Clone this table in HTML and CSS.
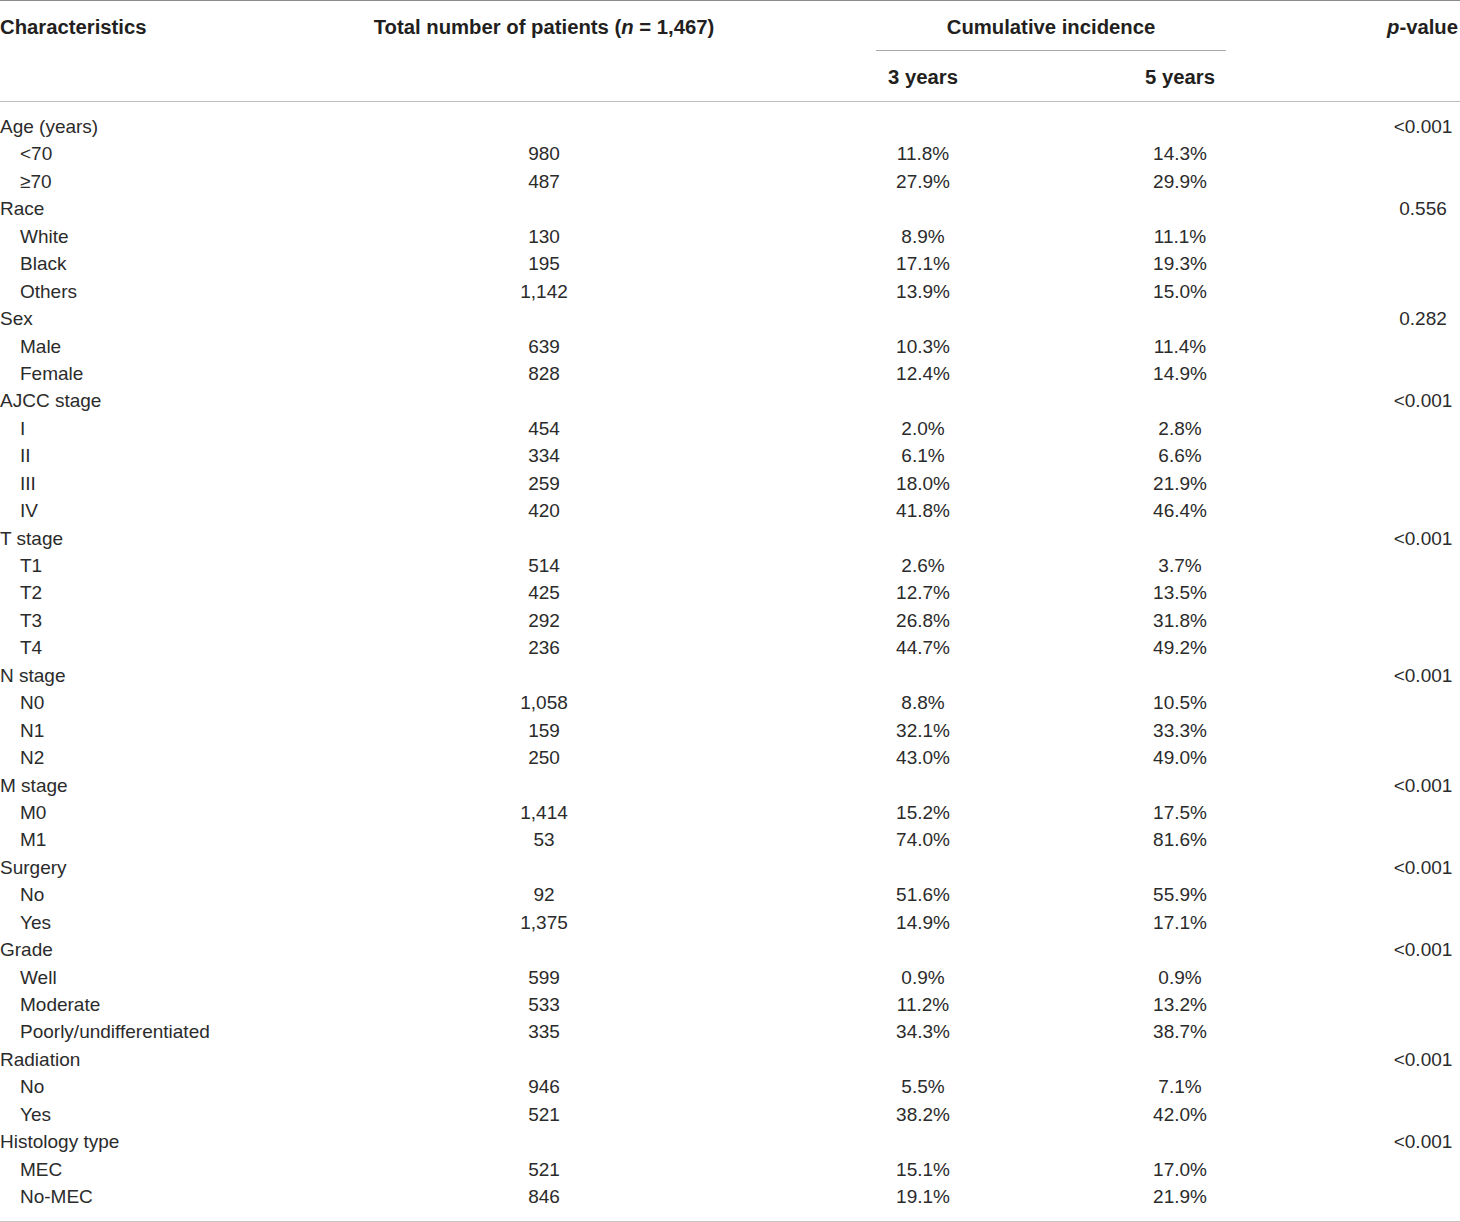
FILE: index.html
```html
<!DOCTYPE html>
<html lang="en">
    <head>
        <meta charset="UTF-8" />
        <meta name="viewport" content="width=device-width, initial-scale=1.0" />
        <title>Cumulative incidence by characteristics</title>
        <link rel="stylesheet" href="styles.css">
    </head>
    <body>
        <table class="results">
            <colgroup>
                <col class="col-label" />
                <col class="col-total" />
                <col class="col-three" />
                <col class="col-five" />
                <col class="col-p" />
            </colgroup>
            <thead>
                <tr class="head-top">
                    <th rowspan="2" class="label">Characteristics</th>
                    <th rowspan="2">Total number of patients (<i>n</i> = 1,467)</th>
                    <th colspan="2" class="group">
                        <div class="group-title">Cumulative incidence</div>
                    </th>
                    <th rowspan="2" class="pval"><i>p</i>-value</th>
                </tr>
                <tr class="head-sub">
                    <th>3 years</th>
                    <th>5 years</th>
                </tr>
            </thead>
            <tbody>
                <tr class="cat"><td class="label">Age (years)</td><td></td><td></td><td></td><td class="pval">&lt;0.001</td></tr>
                <tr><td class="label sub">&lt;70</td><td>980</td><td>11.8%</td><td>14.3%</td><td></td></tr>
                <tr><td class="label sub">≥70</td><td>487</td><td>27.9%</td><td>29.9%</td><td></td></tr>

                <tr class="cat"><td class="label">Race</td><td></td><td></td><td></td><td class="pval">0.556</td></tr>
                <tr><td class="label sub">White</td><td>130</td><td>8.9%</td><td>11.1%</td><td></td></tr>
                <tr><td class="label sub">Black</td><td>195</td><td>17.1%</td><td>19.3%</td><td></td></tr>
                <tr><td class="label sub">Others</td><td>1,142</td><td>13.9%</td><td>15.0%</td><td></td></tr>

                <tr class="cat"><td class="label">Sex</td><td></td><td></td><td></td><td class="pval">0.282</td></tr>
                <tr><td class="label sub">Male</td><td>639</td><td>10.3%</td><td>11.4%</td><td></td></tr>
                <tr><td class="label sub">Female</td><td>828</td><td>12.4%</td><td>14.9%</td><td></td></tr>

                <tr class="cat"><td class="label">AJCC stage</td><td></td><td></td><td></td><td class="pval">&lt;0.001</td></tr>
                <tr><td class="label sub">I</td><td>454</td><td>2.0%</td><td>2.8%</td><td></td></tr>
                <tr><td class="label sub">II</td><td>334</td><td>6.1%</td><td>6.6%</td><td></td></tr>
                <tr><td class="label sub">III</td><td>259</td><td>18.0%</td><td>21.9%</td><td></td></tr>
                <tr><td class="label sub">IV</td><td>420</td><td>41.8%</td><td>46.4%</td><td></td></tr>

                <tr class="cat"><td class="label">T stage</td><td></td><td></td><td></td><td class="pval">&lt;0.001</td></tr>
                <tr><td class="label sub">T1</td><td>514</td><td>2.6%</td><td>3.7%</td><td></td></tr>
                <tr><td class="label sub">T2</td><td>425</td><td>12.7%</td><td>13.5%</td><td></td></tr>
                <tr><td class="label sub">T3</td><td>292</td><td>26.8%</td><td>31.8%</td><td></td></tr>
                <tr><td class="label sub">T4</td><td>236</td><td>44.7%</td><td>49.2%</td><td></td></tr>

                <tr class="cat"><td class="label">N stage</td><td></td><td></td><td></td><td class="pval">&lt;0.001</td></tr>
                <tr><td class="label sub">N0</td><td>1,058</td><td>8.8%</td><td>10.5%</td><td></td></tr>
                <tr><td class="label sub">N1</td><td>159</td><td>32.1%</td><td>33.3%</td><td></td></tr>
                <tr><td class="label sub">N2</td><td>250</td><td>43.0%</td><td>49.0%</td><td></td></tr>

                <tr class="cat"><td class="label">M stage</td><td></td><td></td><td></td><td class="pval">&lt;0.001</td></tr>
                <tr><td class="label sub">M0</td><td>1,414</td><td>15.2%</td><td>17.5%</td><td></td></tr>
                <tr><td class="label sub">M1</td><td>53</td><td>74.0%</td><td>81.6%</td><td></td></tr>

                <tr class="cat"><td class="label">Surgery</td><td></td><td></td><td></td><td class="pval">&lt;0.001</td></tr>
                <tr><td class="label sub">No</td><td>92</td><td>51.6%</td><td>55.9%</td><td></td></tr>
                <tr><td class="label sub">Yes</td><td>1,375</td><td>14.9%</td><td>17.1%</td><td></td></tr>

                <tr class="cat"><td class="label">Grade</td><td></td><td></td><td></td><td class="pval">&lt;0.001</td></tr>
                <tr><td class="label sub">Well</td><td>599</td><td>0.9%</td><td>0.9%</td><td></td></tr>
                <tr><td class="label sub">Moderate</td><td>533</td><td>11.2%</td><td>13.2%</td><td></td></tr>
                <tr><td class="label sub">Poorly/undifferentiated</td><td>335</td><td>34.3%</td><td>38.7%</td><td></td></tr>

                <tr class="cat"><td class="label">Radiation</td><td></td><td></td><td></td><td class="pval">&lt;0.001</td></tr>
                <tr><td class="label sub">No</td><td>946</td><td>5.5%</td><td>7.1%</td><td></td></tr>
                <tr><td class="label sub">Yes</td><td>521</td><td>38.2%</td><td>42.0%</td><td></td></tr>

                <tr class="cat"><td class="label">Histology type</td><td></td><td></td><td></td><td class="pval">&lt;0.001</td></tr>
                <tr><td class="label sub">MEC</td><td>521</td><td>15.1%</td><td>17.0%</td><td></td></tr>
                <tr class="last"><td class="label sub">No-MEC</td><td>846</td><td>19.1%</td><td>21.9%</td><td></td></tr>
            </tbody>
        </table>
    </body>
</html>
```

FILE: styles.css
```css
* {
    margin: 0;
    box-sizing: border-box;
}

body {
    margin: 0;
    background: #fff;
    color: #231f20;
    font-family: 'Liberation Sans', Arial, 'Helvetica Neue', sans-serif;
    font-size: 19px;
}

.results {
    width: 1460px;
    border-collapse: collapse;
    table-layout: fixed;
    border-top: 1px solid #8c8c8c;
    border-bottom: 2px solid #c4c4c4;
}

.col-label { width: 360px; }
.col-total { width: 368px; }
.col-three { width: 390px; }
.col-five { width: 124px; }
.col-p { width: 218px; }

th,
td {
    padding: 0;
    text-align: center;
    white-space: nowrap;
}

th {
    font-size: 20.3px;
    font-weight: bold;
    line-height: 27px;
    vertical-align: top;
}

th i {
    font-style: italic;
}

.head-top th {
    padding-top: 13px;
}

.head-sub th {
    padding-top: 13px;
    padding-bottom: 10px;
    border-bottom: 1px solid #bdbdbd;
}

.head-top th[rowspan] {
    border-bottom: 1px solid #bdbdbd;
}

.group-title {
    margin-left: 148px;
    margin-right: 16px;
    padding-bottom: 9px;
    border-bottom: 1px solid #a8a8a8;
}

th.pval {
    text-align: right;
    padding-right: 2px;
}

td {
    line-height: 27.44px;
    color: #2b2b2b;
}

.label {
    text-align: left;
}

.sub {
    padding-left: 20px;
}

td.pval {
    padding-left: 144px;
}

tbody tr:first-child td {
    padding-top: 11px;
}

tbody tr.last td {
    padding-bottom: 10px;
}
```
